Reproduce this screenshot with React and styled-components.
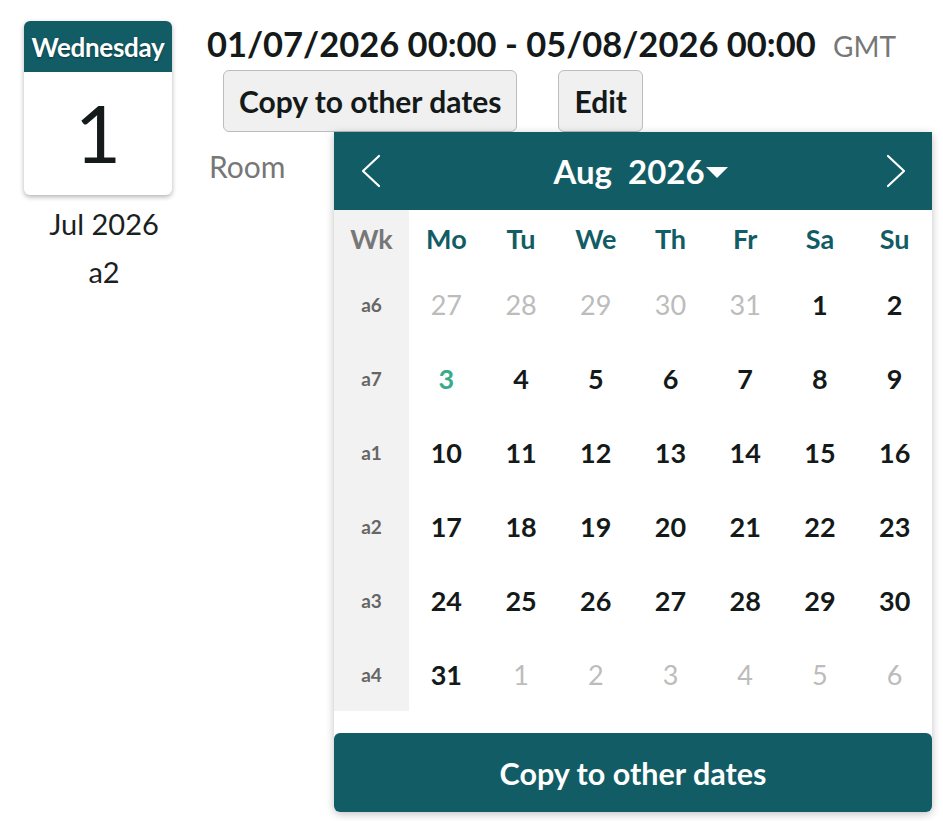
import React from 'react';
import styled, { createGlobalStyle } from 'styled-components';

const GlobalStyle = createGlobalStyle`
	body {
		margin: 0;
		background: #fff;
		font-family: 'Lato', 'Liberation Sans', sans-serif;
		color: #1b1f1f;
	}
`;

const TEAL = '#125c65';

const weeks = [
	{ wk: 'a6', days: [[27, 'out'], [28, 'out'], [29, 'out'], [30, 'out'], [31, 'out'], [1], [2]] },
	{ wk: 'a7', days: [[3, 'today'], [4], [5], [6], [7], [8], [9]] },
	{ wk: 'a1', days: [[10], [11], [12], [13], [14], [15], [16]] },
	{ wk: 'a2', days: [[17], [18], [19], [20], [21], [22], [23]] },
	{ wk: 'a3', days: [[24], [25], [26], [27], [28], [29], [30]] },
	{ wk: 'a4', days: [[31], [1, 'out'], [2, 'out'], [3, 'out'], [4, 'out'], [5, 'out'], [6, 'out']] },
];

const dayNames = ['Mo', 'Tu', 'We', 'Th', 'Fr', 'Sa', 'Su'];

const Chevron = ({ dir }) => (
	<svg width="22" height="34" viewBox="0 0 22 34" fill="none">
		<path
			d={dir === 'left' ? 'M19 2 L3 17 L19 32' : 'M3 2 L19 17 L3 32'}
			stroke="#fff"
			strokeWidth="2.2"
			strokeLinecap="round"
			strokeLinejoin="round"
		/>
	</svg>
);

export default function App() {
	return (
		<Page>
			<GlobalStyle />
			<DateColumn>
				<DayCard>
					<CardHead>Wednesday</CardHead>
					<CardDay>1</CardDay>
				</DayCard>
				<MonthLabel>Jul 2026</MonthLabel>
				<WeekLabel>a2</WeekLabel>
			</DateColumn>

			<Main>
				<Title>
					01/07/2026 00:00 - 05/08/2026 00:00 <Zone>GMT</Zone>
				</Title>
				<Actions>
					<GreyButton>Copy to other dates</GreyButton>
					<GreyButton>Edit</GreyButton>
				</Actions>
				<FieldLabel>Room</FieldLabel>

				<Popup>
					<PopupHead>
						<NavButton><Chevron dir="left" /></NavButton>
						<MonthTitle>
							Aug <span>2026</span><Caret />
						</MonthTitle>
						<NavButton><Chevron dir="right" /></NavButton>
					</PopupHead>

					<Grid>
						<WkCell head>Wk</WkCell>
						{dayNames.map((d) => <DayName key={d}>{d}</DayName>)}
						{weeks.map((w) => (
							<React.Fragment key={w.wk}>
								<WkCell>{w.wk}</WkCell>
								{w.days.map(([n, kind], i) => (
									<DayCell key={i} kind={kind}>{n}</DayCell>
								))}
							</React.Fragment>
						))}
					</Grid>

					<CopyButton>Copy to other dates</CopyButton>
				</Popup>
			</Main>
		</Page>
	);
}

const Page = styled.div`
	display: flex;
	align-items: flex-start;
	gap: 35px;
	padding: 21px 0 0 24px;
	min-height: 821px;
	box-sizing: border-box;
`;

const DateColumn = styled.div`
	display: flex;
	flex-direction: column;
	align-items: center;
	width: 148px;
`;

const DayCard = styled.div`
	width: 148px;
	height: 174px;
	border-radius: 6px;
	background: #fff;
	box-shadow: 0 2px 5px rgba(0, 0, 0, 0.3);
	overflow: hidden;
	display: flex;
	flex-direction: column;
`;

const CardHead = styled.div`
	height: 51px;
	background: ${TEAL};
	color: #fff;
	font-weight: 700;
	font-size: 26px;
	letter-spacing: -0.3px;
	display: flex;
	align-items: center;
	justify-content: center;
	text-shadow: 0 1px 2px rgba(0, 0, 0, 0.4);
`;

const CardDay = styled.div`
	flex: 1;
	display: flex;
	align-items: center;
	justify-content: center;
	font-size: 80px;
	color: #151a1a;
	padding-bottom: 4px;
`;

const MonthLabel = styled.div`
	margin-top: 12px;
	padding-left: 12px;
	font-size: 29px;
	line-height: 34px;
`;

const WeekLabel = styled.div`
	margin-top: 14px;
	padding-left: 12px;
	font-size: 29px;
	line-height: 34px;
`;

const Main = styled.div`
	position: relative;
	display: flex;
	flex-direction: column;
	align-items: flex-start;
	flex: 1;
`;

const Title = styled.div`
	font-size: 34.5px;
	font-weight: 700;
	line-height: 46px;
	color: #141919;
	white-space: nowrap;
`;

const Zone = styled.span`
	font-size: 28px;
	font-weight: 400;
	color: #777;
	margin-left: 9px;
`;

const Actions = styled.div`
	display: flex;
	gap: 41px;
	margin-left: 16px;
	margin-top: 1px;
`;

const GreyButton = styled.button`
	height: 62px;
	padding: 0 15px;
	background: #f0f0f0;
	border: 1.5px solid #bdbdbd;
	border-radius: 6px;
	font-family: inherit;
	font-size: 30px;
	font-weight: 700;
	color: #141919;
`;

const FieldLabel = styled.div`
	margin-top: 16px;
	margin-left: 2px;
	font-size: 30px;
	line-height: 36px;
	color: #777;
`;

const Popup = styled.div`
	position: absolute;
	left: 127px;
	top: 111px;
	width: 598px;
	background: #fff;
	box-shadow: 0 2px 8px rgba(0, 0, 0, 0.25);
	border-radius: 0 0 6px 6px;
	display: flex;
	flex-direction: column;
`;

const PopupHead = styled.div`
	height: 78px;
	background: ${TEAL};
	display: flex;
	align-items: center;
	justify-content: space-between;
	padding: 0 25px 0 26px;
`;

const NavButton = styled.div`
	display: flex;
	align-items: center;
`;

const MonthTitle = styled.div`
	display: flex;
	align-items: center;
	color: #fff;
	font-size: 33px;
	font-weight: 700;
	margin-left: 14px;

	span {
		margin-left: 16px;
	}
`;

const Caret = styled.i`
	width: 0;
	height: 0;
	border-left: 11px solid transparent;
	border-right: 11px solid transparent;
	border-top: 11px solid #fff;
	margin-left: 1px;
	margin-top: 2px;
`;

const Grid = styled.div`
	display: grid;
	grid-template-columns: 75px repeat(7, 1fr);
	grid-template-rows: 57px repeat(6, 74px);
	padding-bottom: 1px;
`;

const WkCell = styled.div`
	background: #f2f2f2;
	display: flex;
	align-items: center;
	justify-content: center;
	color: ${(p) => (p.head ? '#777' : '#666')};
	font-weight: 700;
	font-size: ${(p) => (p.head ? '27px' : '19px')};
`;

const DayName = styled.div`
	display: flex;
	align-items: center;
	justify-content: center;
	color: ${TEAL};
	font-weight: 700;
	font-size: 27px;
`;

const DayCell = styled.div`
	display: flex;
	align-items: center;
	justify-content: center;
	font-size: 27px;
	font-weight: ${(p) => (p.kind === 'out' ? 400 : 700)};
	color: ${(p) => (p.kind === 'out' ? '#bcbcbc' : p.kind === 'today' ? '#3aaa8c' : '#141919')};
`;

const CopyButton = styled.button`
	margin-top: 21px;
	height: 79px;
	border: none;
	border-radius: 6px;
	background: ${TEAL};
	color: #fff;
	font-family: inherit;
	font-size: 30.5px;
	font-weight: 700;
`;
